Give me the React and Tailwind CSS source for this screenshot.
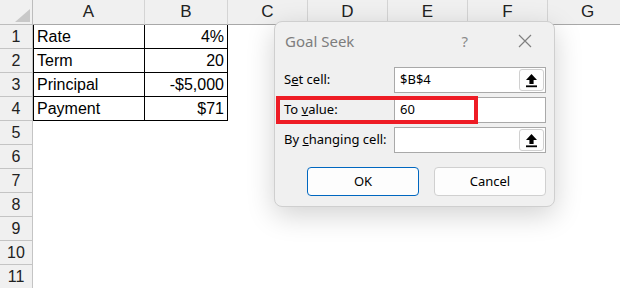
import React from "react";

const cols = [
  { l: "A", w: 112 },
  { l: "B", w: 83 },
  { l: "C", w: 80 },
  { l: "D", w: 80 },
  { l: "E", w: 80 },
  { l: "F", w: 80 },
  { l: "G", w: 80 },
];

const data = [
  ["Rate", "4%"],
  ["Term", "20"],
  ["Principal", "-$5,000"],
  ["Payment", "$71"],
];

function UpIcon() {
  return (
    <svg width="13" height="15" viewBox="0 0 13 15">
      <path d="M6.5 1 L12 7 L8.6 7 L8.6 11 L4.4 11 L4.4 7 L1 7 Z" fill="#000" />
      <rect x="1" y="12.4" width="11" height="1.8" fill="#000" />
    </svg>
  );
}

function Field({ value, btn }) {
  return (
    <div className="w-[152px] h-[26px] border border-[#a9a9a9] bg-white flex items-center justify-between">
      <span className="pl-[5px] text-[13px] text-black">{value}</span>
      {btn && (
        <div className="w-[25px] h-[22px] mr-[1px] rounded-[3px] border border-[#d0d0d0] bg-[#fdfdfd] flex items-center justify-center">
          <UpIcon />
        </div>
      )}
    </div>
  );
}

export default function App() {
  return (
    <div className="relative w-[620px] h-[288px] overflow-hidden bg-white font-['Liberation_Sans',sans-serif]">
      {/* header row */}
      <div className="flex h-[25px]">
        <div className="w-[33px] shrink-0 h-[25px] bg-[#f0f0f0] border-r border-b border-[#bdbdbd] relative">
          <svg className="absolute left-[15px] top-[9px]" width="15" height="13" viewBox="0 0 15 13">
            <polygon points="15,0 15,13 0,13" fill="#c8c8c8" />
          </svg>
        </div>
        {cols.map((c) => (
          <div
            key={c.l}
            style={{ width: c.w }}
            className="shrink-0 h-[25px] bg-[#f0f0f0] border-r border-r-[#d4d4d4] border-b border-b-[#a8a8a8] flex items-center justify-center text-[17px] text-[#222]"
          >
            {c.l}
          </div>
        ))}
      </div>
      {/* rows */}
      {Array.from({ length: 11 }).map((_, i) => {
        const row = data[i];
        return (
          <div key={i} className="flex h-[24px]">
            <div className="w-[33px] shrink-0 h-[24px] bg-[#f0f0f0] border-r border-b border-[#c4c4c4] flex items-center justify-center text-[16px] text-[#222]">
              {i + 1}
            </div>
            {row ? (
              <>
                <div className="w-[112px] shrink-0 h-[24px] border-l border-r border-b border-black flex items-center pl-[3px] text-[16px] text-black">
                  {row[0]}
                </div>
                <div className="w-[83px] shrink-0 h-[24px] border-r border-b border-black flex items-center justify-end pr-[3px] text-[16px] text-black">
                  {row[1]}
                </div>
              </>
            ) : null}
          </div>
        );
      })}

      {/* Goal Seek dialog */}
      <div className="absolute left-[274px] top-[21px] w-[281px] h-[186px] rounded-[8px] border border-[#cfcfcf] bg-[#f0f0f0] shadow-[0_8px_28px_rgba(0,0,0,0.18)] font-['Noto_Sans',sans-serif]">
        <div className="flex items-center h-[38px] pl-[10px] pr-[22px]">
          <span className="text-[15px] text-[#7d7d7d]">Goal Seek</span>
          <span className="ml-auto mr-[50px] text-[15px] text-[#8a8a8a]">?</span>
          <svg width="14" height="14" viewBox="0 0 14 14">
            <path d="M1 1 L13 13 M13 1 L1 13" stroke="#808080" strokeWidth="1.2" />
          </svg>
        </div>
        <div className="flex flex-col gap-[4px] mt-[7px] pl-[9px]">
          <div className="flex items-center">
            <span className="w-[110px] text-[13px] text-black">
              S<span className="underline">e</span>t cell:
            </span>
            <Field value="$B$4" btn />
          </div>
          <div className="flex items-center">
            <span className="w-[110px] text-[13px] text-black">
              To <span className="underline">v</span>alue:
            </span>
            <Field value="60" />
          </div>
          <div className="flex items-center">
            <span className="w-[110px] text-[13px] text-black">
              By <span className="underline">c</span>hanging cell:
            </span>
            <Field value="" btn />
          </div>
        </div>
        <div className="flex gap-[15px] mt-[14px] pl-[32px]">
          <div className="w-[112px] h-[29px] rounded-[4px] border border-[#0067c0] bg-[#fdfdfd] flex items-center justify-center text-[13px] text-black">
            OK
          </div>
          <div className="w-[112px] h-[29px] rounded-[4px] border border-[#d0d0d0] bg-[#fdfdfd] flex items-center justify-center text-[13px] text-black">
            Cancel
          </div>
        </div>
        {/* red highlight */}
        <div className="absolute left-[1px] top-[74px] w-[202px] h-[28px] border-[4px] border-[#ee1c25]" />
      </div>
    </div>
  );
}
